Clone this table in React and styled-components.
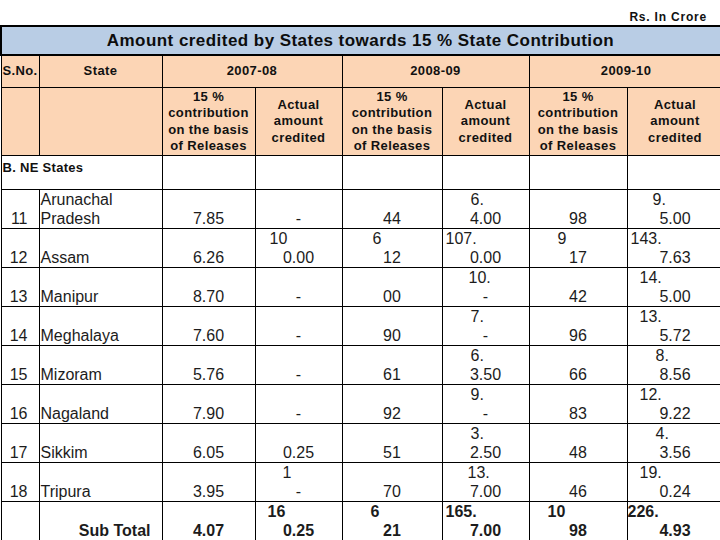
import React from 'react';
import styled, { createGlobalStyle } from 'styled-components';

const Global = createGlobalStyle`
  html, body {
    margin: 0;
    padding: 0;
    background: #ffffff;
    overflow: hidden;
  }
  body {
    font-family: "Liberation Sans", Arial, sans-serif;
    color: #1c1c1c;
  }
`;

const Page = styled.div`
  width: 720px;
  height: 540px;
  overflow: hidden;
`;

const Unit = styled.div`
  height: 25px;
  display: flex;
  align-items: flex-end;
  justify-content: flex-end;
  padding-right: 13px;
  box-sizing: border-box;
  font-size: 12px;
  font-weight: bold;
  letter-spacing: 0.8px;
  line-height: 15px;
  color: #111;
`;

const Table = styled.table`
  border-collapse: collapse;
  table-layout: fixed;
  width: 722px;
`;

const Col = styled.col`
  width: ${(p) => p.$w}px;
`;

const TitleCell = styled.td`
  height: 27px;
  padding: 0 4px 0 0;
  background: #b9cde5;
  border-top: 2px solid #000;
  border-bottom: 2px solid #000;
  border-left: 2px solid #000;
  text-align: center;
  font-size: 17px;
  font-weight: bold;
  color: #0d0d0d;
  letter-spacing: 0.45px;
`;

const HeadCell = styled.td`
  height: ${(p) => p.$h}px;
  padding: 0;
  background: #fcd5b5;
  border: 1px solid #000;
  text-align: center;
  vertical-align: middle;
  font-size: 13px;
  font-weight: bold;
  letter-spacing: 0.4px;
  line-height: 16.5px;
  color: #111;
`;

const GroupCell = styled.td`
  height: 33px;
  padding: 0 0 0 1px;
  border: 1px solid #000;
  vertical-align: top;
  font-size: 13px;
  font-weight: bold;
  letter-spacing: 0.3px;
  line-height: 24px;
  color: #111;
`;

const BlankCell = styled.td`
  padding: 0;
  border: 1px solid #000;
`;

const Cell = styled.td`
  height: 38px;
  padding: ${(p) => (p.$align === 'right' ? '0 11px 0 0' : p.$align === 'left' ? '0 0 0 1px' : '0')};
  border: 1px solid #000;
  vertical-align: bottom;
  text-align: ${(p) => p.$align || 'center'};
  font-size: 16px;
  font-weight: ${(p) => (p.$bold ? 'bold' : 'normal')};
  line-height: 19px;
  white-space: nowrap;
`;

const Line = styled.div`
  text-align: ${(p) => (p.$indent !== undefined ? 'left' : 'inherit')};
  padding-left: ${(p) => p.$indent || 0}px;
`;

const widths = [38, 123, 93, 87, 100, 87, 98, 96];

const rows = [
  { n: '11', name: ['Arunachal', 'Pradesh'], c1: '7.85', a1: '-', c2: '44', a2: ['6.', 28, '4.00'], c3: '98', a3: ['9.', 25, '5.00'] },
  { n: '12', name: ['Assam'], c1: '6.26', a1: ['10', 14, '0.00'], c2: ['6', 30, '12'], a2: ['107.', 3, '0.00'], c3: ['9', 28, '17'], a3: ['143.', 3, '7.63'] },
  { n: '13', name: ['Manipur'], c1: '8.70', a1: '-', c2: '00', a2: ['10.', 26, '-'], c3: '42', a3: ['14.', 12, '5.00'] },
  { n: '14', name: ['Meghalaya'], c1: '7.60', a1: '-', c2: '90', a2: ['7.', 28, '-'], c3: '96', a3: ['13.', 12, '5.72'] },
  { n: '15', name: ['Mizoram'], c1: '5.76', a1: '-', c2: '61', a2: ['6.', 28, '3.50'], c3: '66', a3: ['8.', 28, '8.56'] },
  { n: '16', name: ['Nagaland'], c1: '7.90', a1: '-', c2: '92', a2: ['9.', 28, '-'], c3: '83', a3: ['12.', 12, '9.22'] },
  { n: '17', name: ['Sikkim'], c1: '6.05', a1: '0.25', c2: '51', a2: ['3.', 28, '2.50'], c3: '48', a3: ['4.', 28, '3.56'] },
  { n: '18', name: ['Tripura'], c1: '3.95', a1: ['1', 27, '-'], c2: '70', a2: ['13.', 25, '7.00'], c3: '46', a3: ['19.', 12, '0.24'] },
];

const total = { c1: '4.07', a1: ['16', 12, '0.25'], c2: ['6', 28, '21'], a2: ['165.', 3, '7.00'], c3: ['10', 18, '98'], a3: ['226.', 0, '4.93'] };

function Value({ v, bold }) {
  if (Array.isArray(v)) {
    return (
      <Cell $bold={bold}>
        <Line $indent={v[1]}>{v[0]}</Line>
        <Line>{v[2]}</Line>
      </Cell>
    );
  }
  return <Cell $bold={bold}>{v}</Cell>;
}

const cols = ['c1', 'a1', 'c2', 'a2', 'c3', 'a3'];

export default function App() {
  return (
    <Page>
      <Global />
      <Unit>Rs. In Crore</Unit>
      <Table>
        <colgroup>
          {widths.map((w, i) => (
            <Col key={i} $w={w} />
          ))}
        </colgroup>
        <tbody>
          <tr>
            <TitleCell colSpan={8}>Amount credited by States towards 15 % State Contribution</TitleCell>
          </tr>
          <tr>
            <HeadCell $h={31}>S.No.</HeadCell>
            <HeadCell $h={31}>State</HeadCell>
            <HeadCell $h={31} colSpan={2}>2007-08</HeadCell>
            <HeadCell $h={31} colSpan={2}>2008-09</HeadCell>
            <HeadCell $h={31} colSpan={2}>2009-10</HeadCell>
          </tr>
          <tr>
            <HeadCell $h={67} />
            <HeadCell $h={67} />
            {[0, 1, 2].map((i) => (
              <React.Fragment key={i}>
                <HeadCell $h={67}>
                  15 %<br />contribution<br />on the basis<br />of Releases
                </HeadCell>
                <HeadCell $h={67}>
                  Actual<br />amount<br />credited
                </HeadCell>
              </React.Fragment>
            ))}
          </tr>
          <tr>
            <GroupCell colSpan={2}>B. NE States</GroupCell>
            {cols.map((c) => (
              <BlankCell key={c} />
            ))}
          </tr>
          {rows.map((r) => (
            <tr key={r.n}>
              <Cell $align="right">{r.n}</Cell>
              <Cell $align="left">
                {r.name.map((l) => (
                  <Line key={l}>{l}</Line>
                ))}
              </Cell>
              {cols.map((c) => (
                <Value key={c} v={r[c]} />
              ))}
            </tr>
          ))}
          <tr>
            <Cell />
            <Cell $align="right" $bold>
              Sub Total
            </Cell>
            {cols.map((c) => (
              <Value key={c} v={total[c]} bold />
            ))}
          </tr>
        </tbody>
      </Table>
    </Page>
  );
}
